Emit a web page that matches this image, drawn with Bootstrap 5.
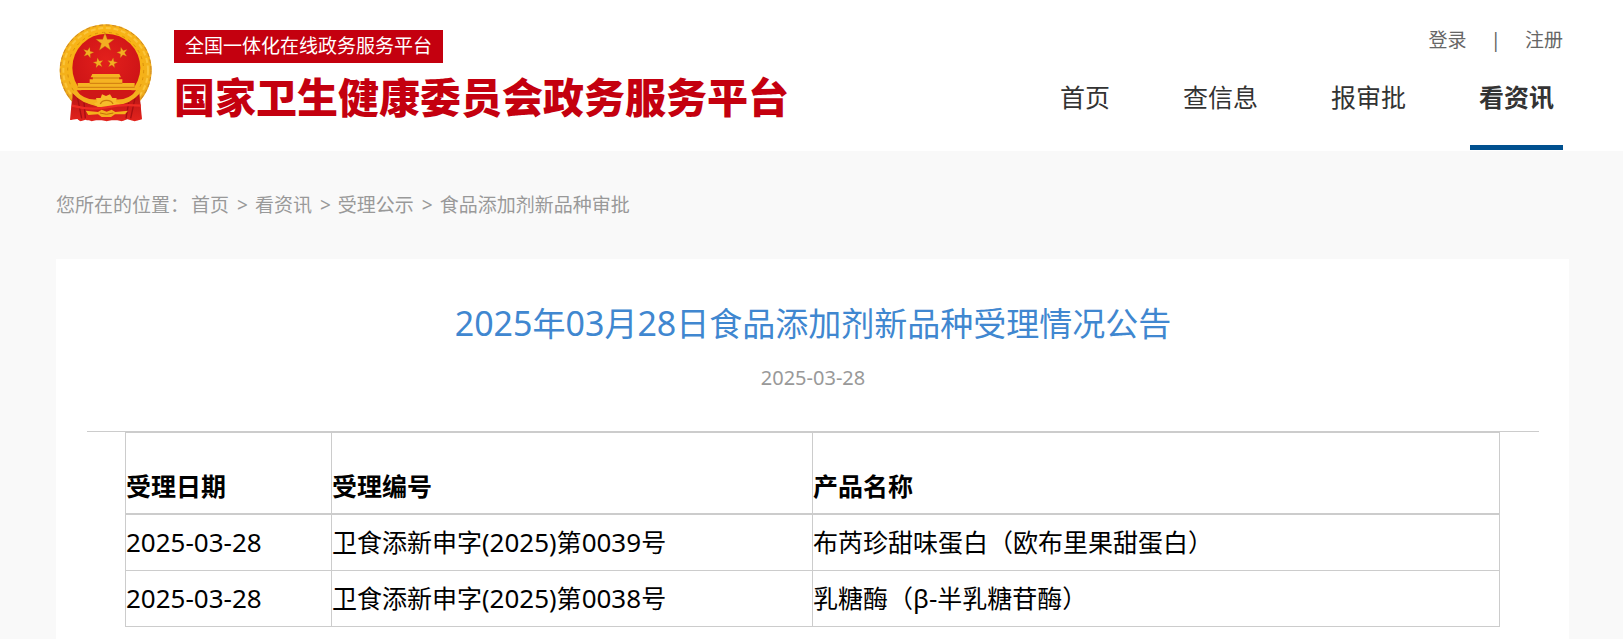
<!DOCTYPE html>
<html lang="zh-CN">
<head>
<meta charset="utf-8">
<meta name="viewport" content="width=device-width, initial-scale=1">
<title>国家卫生健康委员会政务服务平台</title>
<link href="https://cdn.jsdelivr.net/npm/bootstrap@5.3.0/dist/css/bootstrap.min.css" rel="stylesheet">
<style>
  body { font-family: "Noto Sans", "Noto Sans CJK SC", sans-serif; background: #f9f9f9; color: #000; font-size: 25px; line-height: 32px; }
  a { color: inherit; text-decoration: none; }
  .site-head { padding: 0 60px 1px 56px; min-height: 151px; }
  .emblem { width: 100px; height: 104px; margin-top: 21px; }
  .brand-block { margin: 30px 0 0 18px; color: #c4000f; }
  .brand-tag { background: #c4000f; color: #fff; font-size: 19px; line-height: 33px; padding: 0 11px; }
  .brand-name { font-size: 41px; line-height: 48px; font-weight: 900; margin: 10px 0 0; white-space: nowrap; }
  .user-links { font-size: 19px; line-height: 24px; padding-top: 28px; gap: 20px; color: #666; }
  .main-nav { gap: 55px; color: #333; }
  .main-nav a { padding: 0 9px 32px; border-bottom: 5px solid transparent; white-space: nowrap; }
  .main-nav a.active { font-weight: 700; border-color: #00508f; }
  .page-body { padding: 0 54px 0 56px; }
  .crumbs { font-size: 19px; line-height: 24px; padding: 42px 0; gap: 2px; color: #999; }
  .crumbs .breadcrumb-item + .breadcrumb-item { padding-left: 8px; }
  .crumbs .breadcrumb-item + .breadcrumb-item::before { content: ">"; color: #999; padding-right: 7px; }
  .notice { padding: 44px 30px 12px 31px; }
  .notice h1 { font-size: 33px; line-height: 40px; font-weight: 400; color: #4087d0; margin: 0; }
  .notice h1 .num { font-size: 34px; }
  .notice time { font-size: 20px; line-height: 28px; color: #999; margin-top: 20px; }
  .notice-main { border-top: 1px solid #ccc; margin-top: 39px; padding: 0 39px 0 38px; }
  .records { width: 100%; table-layout: fixed; border-collapse: collapse; }
  .records th, .records td { border: 1px solid #ccc; padding: 11px 0; height: 56px; }
  .records thead th { padding: 37px 0 11px; border-bottom-width: 2px; }
  .records .num { font-size: 26px; }
  .c-date { width: 15%; } .c-no { width: 35%; }
</style>
</head>
<body>
<header class="site-head bg-white d-flex justify-content-between">
  <a class="d-flex" href="#">
    <svg class="emblem flex-shrink-0" viewBox="48 33 300 312" role="img" aria-label="国徽">
      <defs>
        <radialGradient id="gold" cx=".5" cy=".4" r=".65"><stop offset=".5" stop-color="#f9b414"/><stop offset=".8" stop-color="#f2b01d"/><stop offset="1" stop-color="#d98a08"/></radialGradient>
        <radialGradient id="red" cx=".5" cy=".4" r=".6"><stop offset="0" stop-color="#e3201c"/><stop offset="1" stop-color="#cc1316"/></radialGradient>
        <linearGradient id="drape" x2="0" y2="1"><stop offset="0" stop-color="#b81414"/><stop offset="1" stop-color="#e2231d"/></linearGradient>
        <path id="star" d="M0-10 2.4-3.2 9.5-3.1 3.8 1.2 5.9 8.1 0 4-5.9 8.1-3.8 1.2-9.5-3.1-2.4-3.2Z"/>
      </defs>
      <path d="M98 245 90 330 112 327 122 334 142 328 155 334 176 328 200 334 224 328 245 334 262 328 284 334 306 328 298 245Z" fill="url(#drape)"/>
      <circle cx="197" cy="181" r="138" fill="url(#gold)"/>
      <circle cx="197" cy="181" r="127" fill="none" stroke="#fbc53c" stroke-width="6" stroke-dasharray="15 8"/>
      <circle cx="197" cy="181" r="114" fill="none" stroke="#dc900c" stroke-width="3" stroke-dasharray="9 12"/>
      <circle cx="197" cy="181" r="136" fill="none" stroke="#c9852a" stroke-width="3" stroke-dasharray="12 8"/>
      <path d="M98 248Q146 292 197 292T298 248L304 326 292 331 284 319 276 331 264 321 252 331 140 331 128 321 118 332 108 320 93 330Z" fill="url(#drape)"/>
      <circle cx="199" cy="173" r="102" fill="url(#red)"/>
      <path d="M112 260 125 325M132 277 136 325M286 260 272 325M266 277 258 325" stroke="#a70f12" stroke-width="4" fill="none"/>
      <g fill="#f3ae22" stroke="#b9610c" stroke-width=".4">
        <use href="#star" transform="translate(195 97) scale(2.9)"/>
        <use href="#star" transform="translate(145 128) rotate(15) scale(1.7)"/>
        <use href="#star" transform="translate(175 159) rotate(-10) scale(1.6)"/>
        <use href="#star" transform="translate(217 159) rotate(10) scale(1.6)"/>
        <use href="#star" transform="translate(247 128) rotate(-15) scale(1.7)"/>
      </g>
      <path d="M157 192H238L243 202H237V208H247V219H284V240H113V219H149V208H159V202H152Z" fill="#f5b322"/>
      <path d="M157 204H239M149 220H247M113 232H284" stroke="#cf7b10" stroke-width="3" fill="none"/>
      <path d="M110 241H288L270 264Q232 280 199 280T128 264Z" fill="#cf1717"/>
      <path d="M104 240Q135 272 172 268L176 284Q132 288 98 250ZM294 240Q263 272 226 268L222 284Q266 288 300 250Z" fill="#f4b11e"/>
      <path d="M162 280 172 277 168 264 182 264 186 253 198 258 210 253 217 264 230 264 227 276 240 280 227 290H173Z" fill="#f7bd2a"/>
      <path d="M181 282A20 16 0 0 1 219 282" fill="none" stroke="#cc7b0b" stroke-width="4"/>
      <path d="M96 287Q150 302 199 292T302 287" fill="none" stroke="#ed2b23" stroke-width="7"/>
      <path d="M137 302 174 306 185 299 200 305 215 299 226 306 264 302 255 313 225 313 213 321H185L174 313 145 315Z" fill="#f4b01c"/>
      <path d="M180 309Q199 317 220 309" fill="none" stroke="#c66b0b" stroke-width="3"/>
    </svg>
    <div class="brand-block d-flex flex-column align-items-start">
      <span class="brand-tag">全国一体化在线政务服务平台</span>
      <p class="brand-name">国家卫生健康委员会政务服务平台</p>
    </div>
  </a>
  <div class="d-flex flex-column justify-content-between align-items-end">
    <div class="user-links d-flex"><a href="#">登录</a><span class="px-1">|</span><a href="#">注册</a></div>
    <nav class="main-nav d-flex">
      <a href="#">首页</a><a href="#">查信息</a><a href="#">报审批</a><a class="active" href="#" aria-current="page">看资讯</a>
    </nav>
  </div>
</header>
<main class="page-body">
  <nav class="crumbs d-flex" aria-label="breadcrumb">
    <span>您所在的位置：</span>
    <ol class="breadcrumb mb-0">
      <li class="breadcrumb-item"><a href="#">首页</a></li>
      <li class="breadcrumb-item"><a href="#">看资讯</a></li>
      <li class="breadcrumb-item"><a href="#">受理公示</a></li>
      <li class="breadcrumb-item"><a href="#">食品添加剂新品种审批</a></li>
    </ol>
  </nav>
  <article class="notice bg-white">
    <h1 class="text-center"><span class="num">2025</span>年<span class="num">03</span>月<span class="num">28</span>日食品添加剂新品种受理情况公告</h1>
    <time class="d-block text-center" datetime="2025-03-28">2025-03-28</time>
    <div class="notice-main">
      <table class="records">
        <thead>
          <tr><th class="c-date" scope="col">受理日期</th><th class="c-no" scope="col">受理编号</th><th scope="col">产品名称</th></tr>
        </thead>
        <tbody>
          <tr><td class="num">2025-03-28</td><td>卫食添新申字(<span class="num">2025</span>)第<span class="num">0039</span>号</td><td>布芮珍甜味蛋白（欧布里果甜蛋白）</td></tr>
          <tr><td class="num">2025-03-28</td><td>卫食添新申字(<span class="num">2025</span>)第<span class="num">0038</span>号</td><td>乳糖酶（<span class="num">β-</span>半乳糖苷酶）</td></tr>
        </tbody>
      </table>
    </div>
  </article>
</main>
<script src="https://cdn.jsdelivr.net/npm/bootstrap@5.3.0/dist/js/bootstrap.bundle.min.js"></script>
</body>
</html>
